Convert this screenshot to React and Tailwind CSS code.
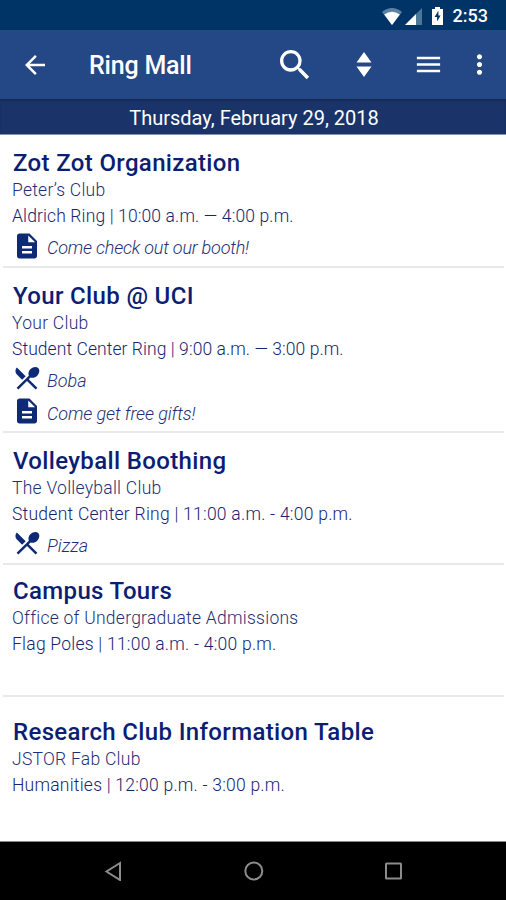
import { MdArrowBack, MdDescription, MdMenu, MdMoreVert, MdRestaurantMenu, MdSearch } from 'react-icons/md';

const EVENTS = [
  {
    title: 'Zot Zot Organization',
    club: 'Peter’s Club',
    when: 'Aldrich Ring | 10:00 a.m. — 4:00 p.m.',
    notes: [{ icon: 'info', text: 'Come check out our booth!', tracking: 'tracking-[-0.2px]' }],
    row: 'h-[133px] pt-3.5',
    whenTracking: 'tracking-[0.13px]',
  },
  {
    title: 'Your Club @ UCI',
    club: 'Your Club',
    when: 'Student Center Ring | 9:00 a.m. — 3:00 p.m.',
    notes: [
      { icon: 'food', text: 'Boba', tracking: 'tracking-normal' },
      { icon: 'info', text: 'Come get free gifts!', tracking: 'tracking-[-0.1px]' },
    ],
    row: 'h-[165px] pt-[13.5px]',
    whenTracking: 'tracking-[0.07px]',
  },
  {
    title: 'Volleyball Boothing',
    club: 'The Volleyball Club',
    when: 'Student Center Ring | 11:00 a.m. - 4:00 p.m.',
    notes: [{ icon: 'food', text: 'Pizza', tracking: 'tracking-normal' }],
    row: 'h-[132px] pt-[13.5px]',
    whenTracking: 'tracking-[0.25px]',
  },
  {
    title: 'Campus Tours',
    club: 'Office of Undergraduate Admissions',
    when: 'Flag Poles | 11:00 a.m. - 4:00 p.m.',
    notes: [],
    row: 'h-[132px] pt-3',
    whenTracking: 'tracking-[0.24px]',
  },
  {
    title: 'Research Club Information Table',
    club: 'JSTOR Fab Club',
    when: 'Humanities | 12:00 p.m. - 3:00 p.m.',
    notes: [],
    row: 'h-[144px] pt-[21px]',
    whenTracking: 'tracking-[0.23px]',
  },
];

function StatusBar() {
  return (
    <div className="h-[30px] bg-[#003366] flex items-center justify-end pr-[18px] pt-0.5 text-white">
      {/* Wifi */}
      <svg className="w-5 h-[17px]" viewBox="0 0 20 17">
        <path d="M0 4Q10-4 20 4L10 17z" fill="#5c83a5" />
        <path d="M2.2 6.6Q10 1 17.8 6.6L10 17z" fill="#fff" />
      </svg>
      {/* Signal */}
      <svg className="w-[17px] h-[17px] ml-[3px]" viewBox="0 0 17 17">
        <path d="M0 17L17 0V17z" fill="#4d7699" />
        <path d="M0 17L11 6V17z" fill="#fff" />
      </svg>
      {/* Battery, charging */}
      <svg className="w-[11px] h-[18px] ml-[10px]" viewBox="0 0 11 18">
        <path d="M0 2H3V0H8V2H11V18H0z" fill="#fff" />
        <path d="M6.4 3.8L2.6 10H5.1V14.6L8.6 8.4H6.4z" fill="#003366" />
      </svg>
      <div className="ml-[10px] text-[18px] leading-none font-medium">2:53</div>
    </div>
  );
}

function AppBar() {
  return (
    <div className="h-[69px] bg-[#244785] flex items-center text-white">
      <MdArrowBack className="w-[30px] h-[30px] ml-5" />
      <div className="ml-[39px] w-[186px] pt-0.5 text-[25px] leading-none tracking-[-0.2px] font-medium">Ring Mall</div>
      <MdSearch className="w-10 h-10 shrink-0" />
      <svg className="w-4 h-[25px] ml-[41px] shrink-0" viewBox="0 0 16 25">
        <path d="M8 0L15.5 10.5H.5zM8 25L15.5 14.5H.5z" fill="currentColor" />
      </svg>
      <MdMenu className="w-[31px] h-[31px] ml-[41px] shrink-0" />
      <MdMoreVert className="w-[31px] h-[31px] ml-5 shrink-0" />
    </div>
  );
}

function Note({ icon, text, tracking }) {
  const Icon = icon === 'food' ? MdRestaurantMenu : MdDescription;
  return (
    <div className="h-[33px] flex items-center">
      <Icon className="w-[30px] h-[30px] text-[#0f2a75]" />
      <span className={`ml-[5px] pt-[5px] text-[18px] leading-none italic font-light text-[#1f2f75] ${tracking}`}>{text}</span>
    </div>
  );
}

function EventRow({ event }) {
  return (
    <div className={`ml-[3px] mr-0.5 border-b-2 border-[#e9e9ea] last:border-b-0 pl-[9px] ${event.row}`}>
      <div className="pl-px text-[24px] leading-7 tracking-[0.35px] font-medium text-[#0b1e73]">{event.title}</div>
      <div className="text-[17.5px] leading-[26px] tracking-[0.26px] font-light text-[#1f2f75]">{event.club}</div>
      <div className={`text-[17.5px] leading-[26px] font-light text-[#15256f] ${event.whenTracking}`}>{event.when}</div>
      {event.notes.map((note) => (
        <Note key={note.text} {...note} />
      ))}
    </div>
  );
}

function NavBar() {
  return (
    <div className="h-[59px] bg-black border-t border-[#8a8a8a] pl-0.5 flex items-center justify-center gap-[120px]">
      <svg className="w-5 h-5" viewBox="0 0 20 20" fill="none" stroke="#8c8c8c" strokeWidth="2">
        <path d="M16 2L2.500 10.500L16 19z" />
      </svg>
      <svg className="w-5 h-5" viewBox="0 0 20 20" fill="none" stroke="#8c8c8c" strokeWidth="2">
        <circle cx="9.800" cy="10" r="8.500" />
      </svg>
      <svg className="w-5 h-5" viewBox="0 0 20 20" fill="none" stroke="#8c8c8c" strokeWidth="2">
        <rect x="2" y="2.500" width="15" height="15" rx=".5" />
      </svg>
    </div>
  );
}

export default function App() {
  return (
    <div className="w-[506px] h-[900px] overflow-hidden bg-white font-['Roboto',sans-serif] whitespace-nowrap">
      <StatusBar />
      <AppBar />
      <div className="h-9 bg-[#1a346a] border-b border-[#8292b3] shadow-[inset_0_2px_2px_rgba(0,0,0,0.2)] pl-0.5 text-center text-[20px] leading-[39px] text-white">
        Thursday, February 29, 2018
      </div>
      <div className="h-[706px]">
        {EVENTS.map((event) => (
          <EventRow key={event.title} event={event} />
        ))}
      </div>
      <NavBar />
    </div>
  );
}
